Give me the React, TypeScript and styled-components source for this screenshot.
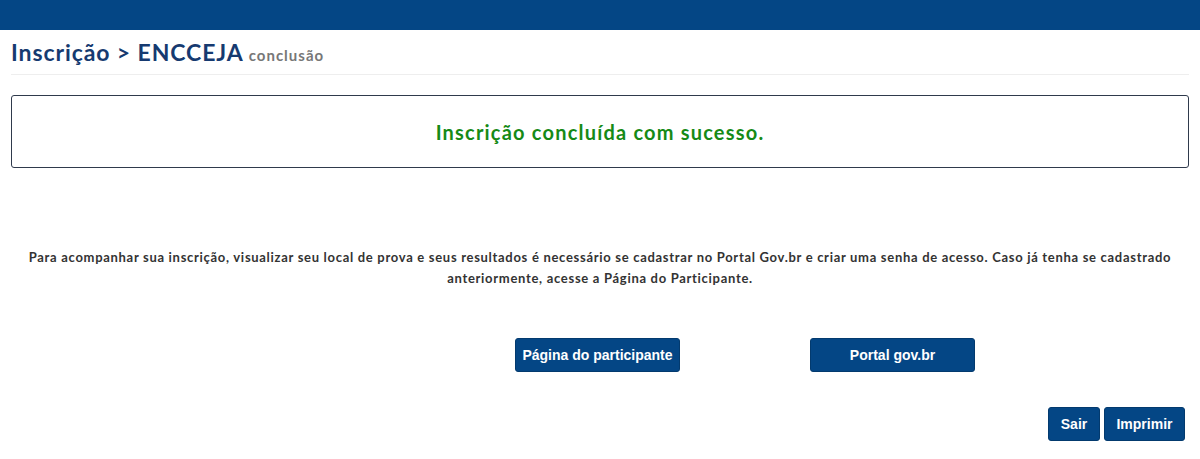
import React from "react";
import styled, { createGlobalStyle } from "styled-components";

const GlobalStyle = createGlobalStyle`
  html, body {
    margin: 0;
    padding: 0;
    background: #fff;
    font-family: Lato, "Open Sans", sans-serif;
  }
`;

const TopBar = styled.div`
  height: 30px;
  background-color: #044685;
`;

const Content = styled.main`
  padding: 0 11px;
`;

const Header = styled.div`
  display: flex;
  align-items: baseline;
  gap: 5px;
  padding: 8px 0 8px;
  border-bottom: 1px solid #eeeeee;
`;

const Title = styled.h1`
  margin: 0;
  font-size: 23px;
  font-weight: 700;
  letter-spacing: 0.9px;
  color: #163a70;
`;

const Subtitle = styled.small`
  font-size: 15px;
  font-weight: 700;
  letter-spacing: 1px;
  color: #777;
`;

const SuccessBox = styled.div`
  margin-top: 20px;
  height: 71px;
  display: flex;
  align-items: center;
  justify-content: center;
  border: 1px solid #2f3a4c;
  border-radius: 3px;
`;

const SuccessText = styled.p`
  margin: 0;
  font-size: 20px;
  font-weight: 700;
  letter-spacing: 1.2px;
  color: #168a16;
`;

const Info = styled.p`
  margin: 79px 0 0;
  text-align: center;
  font-size: 13px;
  line-height: 21px;
  font-weight: 700;
  letter-spacing: 0.7px;
  color: #333;
`;

const LinkRow = styled.div`
  display: flex;
  gap: 130px;
  margin-top: 49px;
  padding-left: 504px;
`;

const Button = styled.button<{ $width?: number }>`
  height: 34px;
  width: ${(p) => (p.$width ? `${p.$width}px` : "auto")};
  padding: 0 4px;
  background-color: #044685;
  border: 1px solid #033a6e;
  border-radius: 3px;
  color: #fff;
  font-family: "Liberation Sans", Arial, sans-serif;
  font-size: 14px;
  font-weight: 700;
  white-space: nowrap;
  cursor: pointer;
`;

const Actions = styled.div`
  display: flex;
  justify-content: flex-end;
  gap: 4px;
  margin-top: 35px;
  padding-right: 4px;
`;

export default function App() {
  return (
    <>
      <GlobalStyle />
      <TopBar />
      <Content>
        <Header>
          <Title>Inscrição &gt; ENCCEJA</Title>
          <Subtitle>conclusão</Subtitle>
        </Header>
        <SuccessBox>
          <SuccessText>Inscrição concluída com sucesso.</SuccessText>
        </SuccessBox>
        <Info>
          Para acompanhar sua inscrição, visualizar seu local de prova e seus resultados é necessário se
          cadastrar no Portal Gov.br e criar uma senha de acesso. Caso já tenha se cadastrado
          <br />
          anteriormente, acesse a Página do Participante.
        </Info>
        <LinkRow>
          <Button $width={165}>Página do participante</Button>
          <Button $width={165}>Portal gov.br</Button>
        </LinkRow>
        <Actions>
          <Button $width={52}>Sair</Button>
          <Button $width={81}>Imprimir</Button>
        </Actions>
      </Content>
    </>
  );
}
